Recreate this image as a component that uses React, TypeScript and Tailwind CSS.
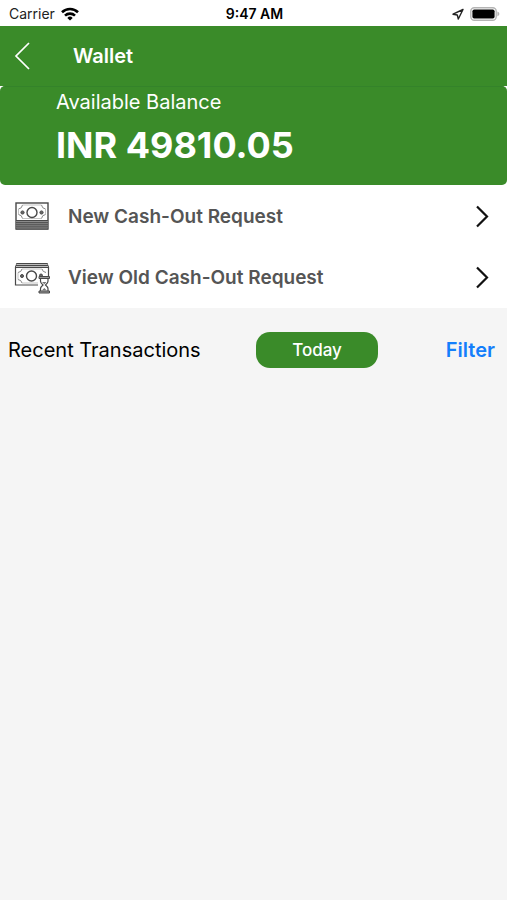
import React from "react";

type MenuRowProps = {
    icon: React.ReactNode,
    label: string,
};

function WifiIcon() {
    return (
        <svg viewBox="0 0 18 14" className="w-[18px] h-[14px]" fill="none" stroke="#000" strokeWidth="2.6">
            <path d="M1 5.2a11.6 11.6 0 0 1 16 0" />
            <path d="M4 8.6a7.2 7.2 0 0 1 10 0" />
            <path d="M9 13.6 6.3 10.9a3.9 3.9 0 0 1 5.4 0Z" fill="#000" stroke="none" />
        </svg>
    )
}

function LocationIcon() {
    return (
        <svg viewBox="0 0 12 12" className="w-3 h-3" fill="none" stroke="#222" strokeWidth="1.4" strokeLinejoin="round">
            <path d="M11 1.5 1 6.2l4.300.8L6.3 11Z" />
        </svg>
    )
}

function BatteryIcon() {
    return (
        <svg viewBox="0 0 30 14" className="w-[30px] h-[14px]">
            <rect x="0.8" y="0.8" width="25.4" height="12.4" rx="3.5" fill="#fff" stroke="#b4b4b4" strokeWidth="1.4" />
            <rect x="2.4" y="2.4" width="22.2" height="9.2" rx="1.8" fill="#000" />
            <path d="M27.4 4.6c2.6 1 2.6 3.8 0 4.8Z" fill="#b4b4b4" />
        </svg>
    )
}

function BackIcon() {
    return (
        <svg viewBox="0 0 16 28" className="w-4 h-7" fill="none" stroke="#fff" strokeWidth="1.7">
            <path d="M15 1 2 14l13 13" />
        </svg>
    )
}

function ChevronIcon() {
    return (
        <svg viewBox="0 0 14 24" className="w-[14px] h-6" fill="none" stroke="#111" strokeWidth="2.2">
            <path d="m2 1.5 10 10-10 10" />
        </svg>
    )
}

function CashStackIcon() {
    return (
        <svg viewBox="0 0 36 32" className="w-9 h-8" fill="none" stroke="#484848">
            <rect x="2" y="2" width="32" height="26" fill="#fff" strokeWidth="1.4" />
            <path d="M2.5 19.5h31V28h-31Z" fill="#8c8c8c" stroke="none" />
            <path d="M2 19.5h32M2 21.7h32M2 23.8h32M2 25.9h32M2 28h32" strokeWidth="1" />
            <path d="M4.5 8q3.500-.5 4-4M31.5 8q-3.500-.5-4-4M4.5 13.5q3.500.5 4 4M31.5 13.5q-3.500.5-4 4" stroke="#888" strokeWidth="1" />
            <path d="M4.5 8v5.5M31.5 8v5.5M8.5 4h19M8.5 17.5h19" stroke="#aaa" strokeWidth="0.7" />
            <circle cx="18" cy="11.5" r="5" strokeWidth="1.4" />
            <circle cx="8.5" cy="11.5" r="1.6" fill="#666" />
            <circle cx="27.5" cy="11.5" r="1.6" fill="#666" />
        </svg>
    )
}

function CashPendingIcon() {
    return (
        <svg viewBox="0 0 36 32" className="w-9 h-8" fill="none" stroke="#484848">
            <path d="M1.5 5 3 1.5h30L34.5 5v18h-33Z" fill="#fff" strokeWidth="1.2" />
            <path d="M2.5 1.5h31v4h-31Z" fill="#bbb" stroke="none" />
            <path d="M2.5 1.5h31M2 3.5h32M1.5 5.5h33" strokeWidth="1" />
            <path d="M4 10.5q3.500-.5 4-3.500M32 10.5q-3.500-.5-4-3.500M4 17.5q3.500.5 4 3.500" stroke="#888" strokeWidth="1" />
            <path d="M4 10.5v7M8 7h20M8 21h16" stroke="#aaa" strokeWidth="0.7" />
            <circle cx="17.5" cy="14" r="5" strokeWidth="1.4" />
            <circle cx="8" cy="14" r="1.5" fill="#666" />
            <circle cx="27" cy="13.5" r="1.5" fill="#666" />
            <path d="M24 14h12v17H24Z" fill="#fff" stroke="none" />
            <path d="M25 14.5h10.5v2H25ZM25 29h10.5v2H25Z" fill="#999" strokeWidth="1" />
            <path d="M26.5 17v2.2q0 1.800 2.500 3.800-2.500 2-2.500 3.800V29M34 17v2.2q0 1.800-2.500 3.800 2.500 2 2.500 3.800V29" strokeWidth="1.2" />
            <path d="M28 20h4.5l-2.2 2.3ZM27.8 28.5l2.5-2.5 2.5 2.5Z" fill="#777" stroke="none" />
        </svg>
    )
}

function MenuRow({icon, label}: MenuRowProps) {
    return (
        <button className="flex w-full h-[61px] items-center pl-[14px] pr-[18px] text-left">
            {icon}
            <span className="ml-[18px] flex-1 text-[19px] leading-6 font-semibold text-[#555]">{label}</span>
            <ChevronIcon />
        </button>
    )
}

export default function App() {
    return (
        <div className="min-h-screen bg-[#f5f5f5] font-['Inter','Liberation_Sans',sans-serif] text-black">
            <div className="grid grid-cols-3 h-[26px] items-center bg-white pl-[9px] pr-[7px] pt-px text-[14px] leading-5">
                <div className="flex items-center gap-[6px] text-[#222]">
                    <span>Carrier</span>
                    <WifiIcon />
                </div>
                <span className="text-center font-semibold">9:47 AM</span>
                <div className="flex items-center justify-end gap-[6px]">
                    <LocationIcon />
                    <BatteryIcon />
                </div>
            </div>

            <header className="flex h-[60px] items-center bg-[#3a8b29] pl-[14px] text-white">
                <button aria-label="Back">
                    <BackIcon />
                </button>
                <h1 className="ml-[43px] text-[20px] leading-6 font-semibold">Wallet</h1>
            </header>

            <main>
                <div className="bg-white">
                    <section className="mb-px h-[99px] rounded-[5px] border-t border-[#34832a] bg-[#3a8b29] pl-14 pt-[3px] text-white">
                        <p className="text-[20px] leading-6">Available Balance</p>
                        <p className="mt-[9px] text-[36px] leading-[44px] font-bold">INR 49810.05</p>
                    </section>
                    <MenuRow icon={<CashStackIcon />} label="New Cash-Out Request" />
                    <MenuRow icon={<CashPendingIcon />} label="View Old Cash-Out Request" />
                </div>

                <div className="flex items-center pl-2 pr-3 pt-6">
                    <h2 className="flex-1 text-[20px] leading-6">Recent Transactions</h2>
                    <button className="h-9 w-[122px] rounded-[14px] bg-[#3a8b29] text-[17px] leading-6 font-medium text-white">Today</button>
                    <div className="flex-1 max-w-[117px] text-right">
                        <button className="text-[20px] leading-6 font-semibold text-[#147efb]">Filter</button>
                    </div>
                </div>
            </main>
        </div>
    )
}
